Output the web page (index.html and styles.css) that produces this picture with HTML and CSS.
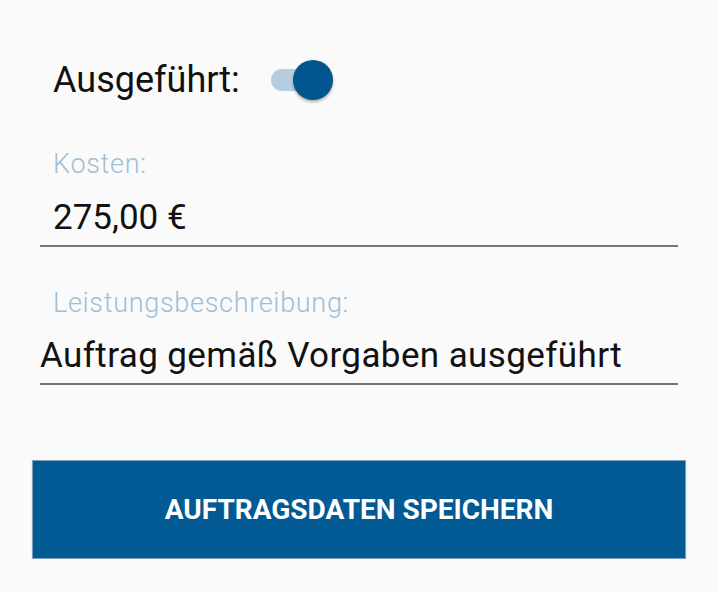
FILE: index.html
```html
<!DOCTYPE html>
<html lang="de">
<head>
<meta charset="utf-8">
<link rel="stylesheet" href="styles.css">
</head>
<body>
<main class="form">
  <div class="switch-row">
    <span class="switch-label">Ausgeführt:</span>
    <span class="switch" role="switch" aria-checked="true">
      <span class="switch-track"></span>
      <span class="switch-thumb"></span>
    </span>
  </div>

  <div class="field field-kosten">
    <label class="field-label">Kosten:</label>
    <div class="field-input field-input-indent">275,00 €</div>
  </div>

  <div class="field field-leistung">
    <label class="field-label">Leistungsbeschreibung:</label>
    <div class="field-input field-input-wide">Auftrag gemäß Vorgaben ausgeführt</div>
  </div>

  <button class="save-btn">AUFTRAGSDATEN SPEICHERN</button>
</main>
</body>
</html>
```

FILE: styles.css
```css
html, body {
  margin: 0;
  padding: 0;
  background: #fafafa;
  font-family: Roboto, "Liberation Sans", sans-serif;
}

.form {
  display: flex;
  flex-direction: column;
  padding: 58px 32px 0 32px;
}

.switch-row {
  display: flex;
  align-items: center;
  gap: 31px;
  padding-left: 21px;
  height: 44px;
}

.switch-label {
  font-size: 36px;
  color: #111;
  line-height: 44px;
}

.switch {
  position: relative;
  width: 64px;
  height: 42px;
  display: inline-block;
}

.switch-track {
  position: absolute;
  left: 0;
  top: 10px;
  width: 50px;
  height: 22px;
  border-radius: 11px;
  background: #b6cde0;
}

.switch-thumb {
  position: absolute;
  left: 22px;
  top: 1px;
  width: 40px;
  height: 40px;
  border-radius: 50%;
  background: #02568f;
  box-shadow: 0 2px 3px rgba(0,0,0,0.3);
}

.field {
  display: flex;
  flex-direction: column;
  margin-left: 8px;
  margin-right: 8px;
}

.field-kosten {
  margin-top: 47px;
}

.field-kosten .field-input {
  margin-top: 19px;
}

.field-leistung {
  margin-top: 41px;
}

.field-leistung .field-input {
  margin-top: 18px;
}

.field-label {
  font-size: 27px;
  font-weight: 300;
  color: #a0bed4;
  line-height: 30px;
  padding-left: 13px;
  letter-spacing: 0.7px;
}

.field-input {
  font-size: 35px;
  color: #111;
  line-height: 40px;
  padding-bottom: 7px;
  border-bottom: 2px solid #767676;
}

.field-input-wide {
  font-size: 35px;
  letter-spacing: 0.4px;
}

.field-input-indent {
  padding-left: 13px;
}

.save-btn {
  margin-top: 75px;
  height: 99px;
  width: 654px;
  border: 1px solid #7f9ebc;
  background: #025a94;
  color: #fff;
  font-family: Roboto, "Liberation Sans", sans-serif;
  font-weight: 700;
  font-size: 28px;
  padding: 0;
  box-shadow: 0 1px 2px rgba(0,0,0,0.15);
}
```
